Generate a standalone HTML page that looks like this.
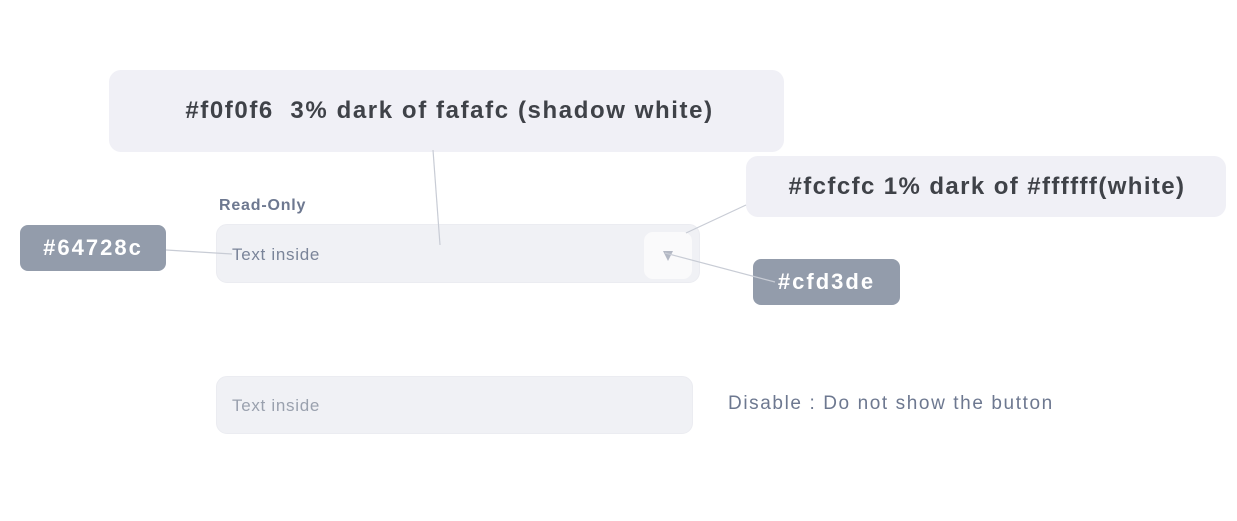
<!DOCTYPE html>
<html><head><meta charset="utf-8"><style>
body{margin:0;width:1237px;height:521px;background:#fff;position:relative;overflow:hidden;font-family:"Liberation Sans",sans-serif}
.a{position:absolute;box-sizing:border-box}
.note{background:#f0f0f6;border-radius:12px;color:#3f4248;font-weight:bold;display:flex;align-items:center;justify-content:center;font-size:24px}
.tag{background:#939cab;border-radius:8px;color:#fff;font-weight:bold;font-size:22px;letter-spacing:2px;display:flex;align-items:center;justify-content:center}
.inp{background:#f0f1f5;border-radius:11px;border:1px solid #ebecf1}
</style></head><body>
<div class="a note" style="left:109px;top:70px;width:675px;height:82px;letter-spacing:1.6px;padding-left:6px">#f0f0f6&nbsp; 3% dark of fafafc (shadow white)</div>
<div class="a note" style="left:746px;top:156px;width:480px;height:61px;letter-spacing:1.4px;padding-left:2px">#fcfcfc 1% dark of #ffffff(white)</div>
<div class="a" style="left:219px;top:197px;font-size:16px;font-weight:bold;color:#6d7890;letter-spacing:0.8px">Read-Only</div>
<div class="a inp" style="left:216px;top:224px;width:484px;height:59px;"></div>
<div class="a" style="left:232px;top:245px;font-size:17px;color:#7a8499;letter-spacing:0.7px">Text inside</div>
<div class="a" style="left:644px;top:232px;width:48px;height:47px;background:#fafafb;border-radius:9px"></div>
<div class="a tag" style="left:20px;top:225px;width:146px;height:46px;">#64728c</div>
<div class="a tag" style="left:753px;top:259px;width:147px;height:46px;">#cfd3de</div>
<svg class="a" style="left:0;top:0" width="1237" height="521">
<path d="M663 251 L673 251 L668 261 Z" fill="#b3b8c4"/>
<g stroke="#c8ccd5" stroke-width="1.2" fill="none">
<line x1="433" y1="150" x2="440" y2="245"/>
<line x1="166" y1="250" x2="232" y2="254"/>
<line x1="686" y1="233" x2="746" y2="205"/>
<line x1="665" y1="253" x2="775" y2="282"/>
</g></svg>
<div class="a inp" style="left:216px;top:376px;width:477px;height:58px;"></div>
<div class="a" style="left:232px;top:396px;font-size:17px;color:#9aa1ae;letter-spacing:0.7px">Text inside</div>
<div class="a" style="left:728px;top:393px;font-size:19px;color:#6d7890;letter-spacing:1.6px">Disable : Do not show the button</div>
</body></html>
